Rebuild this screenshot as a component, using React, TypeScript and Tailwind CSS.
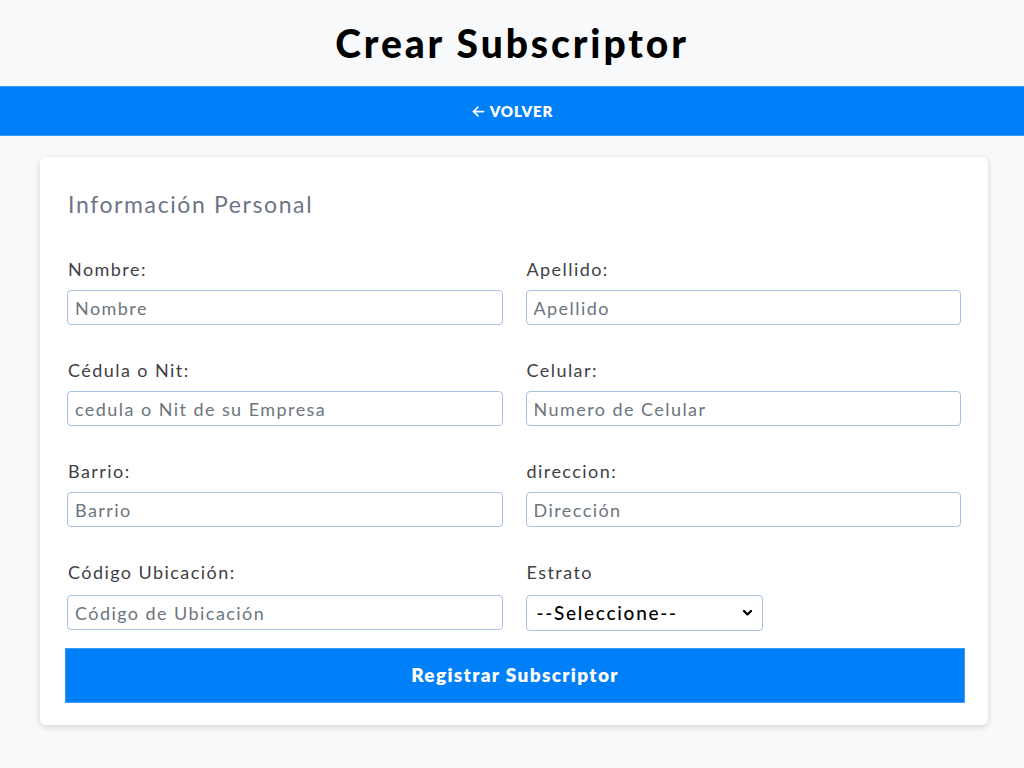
import { FC } from "react";

interface Field {
  label: string;
  placeholder: string;
}

const rows: Field[][] = [
  [
    { label: "Nombre:", placeholder: "Nombre" },
    { label: "Apellido:", placeholder: "Apellido" },
  ],
  [
    { label: "Cédula o Nit:", placeholder: "cedula o Nit de su Empresa" },
    { label: "Celular:", placeholder: "Numero de Celular" },
  ],
  [
    { label: "Barrio:", placeholder: "Barrio" },
    { label: "direccion:", placeholder: "Dirección" },
  ],
];

const font = { fontFamily: "Lato, 'Open Sans', sans-serif" };

const inputClass =
  "w-full h-[35px] px-[7px] text-[18px] tracking-[0.08em] text-[#333] placeholder:text-[#6c757d] bg-white border border-[#a9c1e3] rounded-[4px] outline-none";

const labelClass =
  "block text-[18px] leading-[24px] tracking-[0.08em] text-[#3f3f46] ml-[1px]";

const App: FC = () => {
  return (
    <div className="min-h-[768px] bg-[#f8f9fb]" style={font}>
      <header className="h-[86px] flex items-center justify-center">
        <h1 className="text-[39px] font-black text-black tracking-[2.9px]">
          Crear Subscriptor
        </h1>
      </header>

      <nav className="h-[50px] bg-[#0080f8] border-y border-[#3d9dff] flex items-center justify-center">
        <a href="#" className="flex items-center gap-[4px] text-white font-extrabold text-[15px] tracking-[0.06em]">
          <svg width="15" height="15" viewBox="0 0 24 24" fill="none" stroke="currentColor" strokeWidth="2.8" strokeLinecap="round" strokeLinejoin="round">
            <path d="M20 12H4" />
            <path d="M11 19l-7-7 7-7" />
          </svg>
          <span>VOLVER</span>
        </a>
      </nav>

      <main className="ml-[40px] mr-[36px] mt-[21px] bg-white rounded-[6px] shadow-[0_2px_6px_rgba(0,0,0,0.15)] pt-[32px] pb-[22px] px-[25px]">
        <h2 className="text-[23px] leading-[30px] tracking-[0.07em] text-[#6c7486] ml-[3px] mb-[38px]">
          Información Personal
        </h2>

        <div className="grid grid-cols-2 gap-x-[23px] gap-y-[33px] px-[2px]">
          {rows.flat().map((f) => (
            <div key={f.label}>
              <label className={`${labelClass} mb-[9px]`}>{f.label}</label>
              <input className={inputClass} placeholder={f.placeholder} />
            </div>
          ))}
          <div>
            <label className={`${labelClass} mb-[11px]`}>Código Ubicación:</label>
            <input className={inputClass} placeholder="Código de Ubicación" />
          </div>
          <div>
            <label className={`${labelClass} mb-[11px]`}>Estrato</label>
            <div className="relative w-[237px]">
              <select className="w-full h-[36px] appearance-none pl-[10px] text-[19px] tracking-[0.09em] font-medium text-black bg-white border border-[#a9c1e3] rounded-[4px] outline-none">
                <option>--Seleccione--</option>
                <option>1</option>
                <option>2</option>
                <option>3</option>
                <option>4</option>
                <option>5</option>
                <option>6</option>
              </select>
              <svg className="absolute right-[10px] top-[14px] pointer-events-none" width="11" height="8" viewBox="0 0 11 8" fill="none" stroke="black" strokeWidth="2.4" strokeLinecap="round" strokeLinejoin="round">
                <path d="M2 2l3.5 3.5L9 2" />
              </svg>
            </div>
          </div>
        </div>

        <button className="block w-[900px] h-[55px] mt-[17px] bg-[#0080f8] border border-[#3d9dff] text-white font-extrabold text-[19px] tracking-[0.07em]">
          Registrar Subscriptor
        </button>
      </main>
    </div>
  );
};

export default App;
